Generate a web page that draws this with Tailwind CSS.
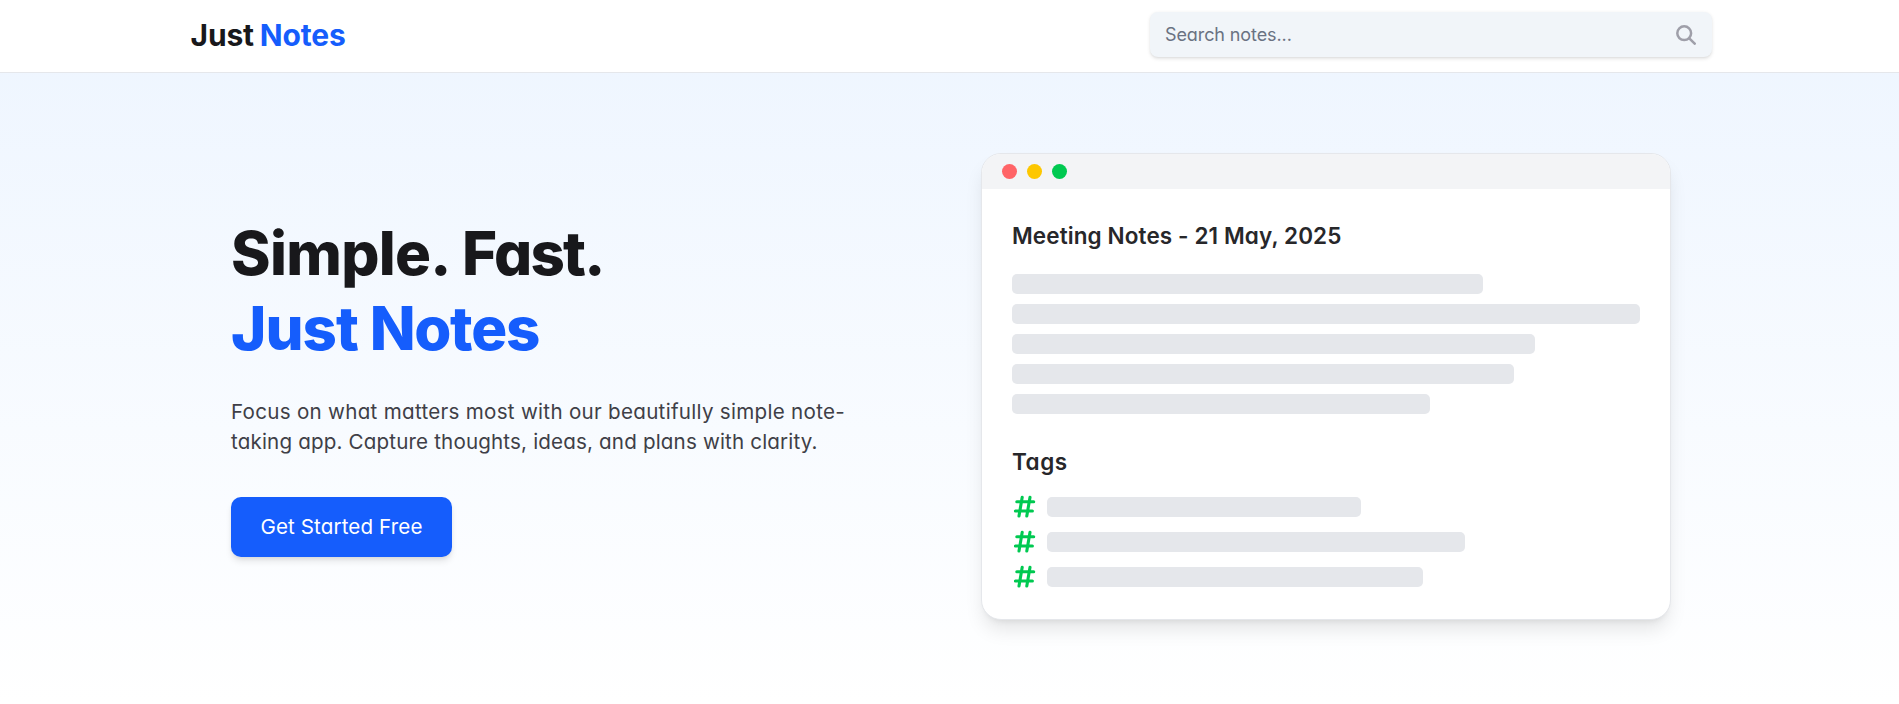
<!DOCTYPE html>
<html lang="en">
<head>
<meta charset="utf-8">
<title>Just Notes</title>
<script src="https://cdn.jsdelivr.net/npm/@tailwindcss/browser@4"></script>
</head>
<body class="h-[704px] overflow-hidden bg-white font-['Inter','Liberation_Sans',sans-serif] [font-feature-settings:'cv11'] text-zinc-900">
<header class="h-[73px] border-b border-gray-200 bg-white">
  <div class="ml-[189px] flex h-[69px] w-[1523px] items-center justify-between">
    <a class="pl-[1.5px] text-[30px] font-bold tracking-[-0.15px] leading-none whitespace-nowrap [word-spacing:-1px]">Just <span class="text-[#155dfc]">Notes</span></a>
    <div class="flex h-[45px] w-[562px] items-center justify-between rounded-[8px] bg-slate-100 pr-[16px] pl-[15px] shadow-[0_1.25px_3.75px_rgb(0_0_0/0.1),0_1.25px_2.5px_-1.25px_rgb(0_0_0/0.1)]">
      <span class="pb-px text-[18px] tracking-[-0.1px] text-gray-500">Search notes...</span>
      <svg class="mt-px size-[20px] text-[#9f9fa9]" viewBox="0 0 20 20" fill="none" stroke="currentColor" stroke-width="2.5" stroke-linecap="round"><circle cx="8.2" cy="8.2" r="6.9"/><path d="M13.3 13.3l5.4 5.4"/></svg>
    </div>
  </div>
</header>
<main class="h-[631px] bg-gradient-to-b from-blue-50 to-white">
  <div class="ml-[231px] flex w-[1440px] justify-between pt-[80px]">
    <section class="w-[640px] pt-[63px]">
      <h1 class="text-[60px] font-extrabold leading-[75px] whitespace-nowrap"><span class="tracking-[-0.7px]">Simple.</span><span class="tracking-[-1.8px]"> Fast.</span><br><span class="text-[#155dfc]"><span class="tracking-[-1px]">Just</span><span class="tracking-[-1.3px]"> Notes</span></span></h1>
      <p class="mt-[31px] text-[20.6px] leading-[30px] text-zinc-700 whitespace-nowrap"><span class="tracking-[0.28px]">Focus on what matters most with our beautifully simple note-</span><br><span class="tracking-[0.16px]">taking app. Capture thoughts, ideas, and plans with clarity.</span></p>
      <button class="mt-[40px] h-[60px] w-[221px] rounded-[10px] bg-[#155dfc] text-[20.6px] tracking-[0.12px] text-white shadow-[0_5px_7.5px_-1.25px_rgb(0_0_0/0.1),0_2.5px_5px_-2.5px_rgb(0_0_0/0.1)] whitespace-nowrap">Get Started Free</button>
    </section>
    <section class="h-[467px] w-[690px] overflow-hidden rounded-[20px] border border-gray-200 bg-white shadow-[0_12.5px_18.75px_-3.75px_rgb(0_0_0/0.1),0_5px_7.5px_-5px_rgb(0_0_0/0.1)]">
      <div class="flex h-[35px] items-center gap-[10px] bg-gray-100 px-[20px]">
        <i class="size-[15px] rounded-full bg-[#ff6467]"></i><i class="size-[15px] rounded-full bg-[#fdc700]"></i><i class="size-[15px] rounded-full bg-[#00c951]"></i>
      </div>
      <div class="p-[30px]">
        <h2 class="text-[22.5px] font-semibold leading-[34px] tracking-[0.11px] text-zinc-800 whitespace-nowrap">Meeting Notes - 21 May, 2025</h2>
        <div class="mt-[21px] flex flex-col gap-[10px]">
          <div class="h-[20px] w-3/4 rounded-[5px] bg-gray-200"></div>
          <div class="h-[20px] w-full rounded-[5px] bg-gray-200"></div>
          <div class="h-[20px] w-5/6 rounded-[5px] bg-gray-200"></div>
          <div class="h-[20px] w-4/5 rounded-[5px] bg-gray-200"></div>
          <div class="h-[20px] w-[418px] rounded-[5px] bg-gray-200"></div>
        </div>
        <h2 class="mt-[30px] text-[22.5px] font-semibold leading-[35px] tracking-[0.5px] text-zinc-800">Tags</h2>
        <div class="mt-[15px] flex flex-col gap-[10px]">
          <div class="flex h-[25px] items-center">
            <svg class="mr-[10px] size-[25px] shrink-0 text-[#00c951]" viewBox="0 0 25 25" fill="none" stroke="currentColor" stroke-width="3.1" stroke-linecap="round"><path d="M4.8 7.7H21.7M3.4 17H20.4M10.2 3.2L7 22M18 3.2L14.8 22"/></svg>
            <div class="h-[20px] w-[314px] rounded-[5px] bg-gray-200"></div>
          </div>
          <div class="flex h-[25px] items-center">
            <svg class="mr-[10px] size-[25px] shrink-0 text-[#00c951]" viewBox="0 0 25 25" fill="none" stroke="currentColor" stroke-width="3.1" stroke-linecap="round"><path d="M4.8 7.7H21.7M3.4 17H20.4M10.2 3.2L7 22M18 3.2L14.8 22"/></svg>
            <div class="h-[20px] w-[418px] rounded-[5px] bg-gray-200"></div>
          </div>
          <div class="flex h-[25px] items-center">
            <svg class="mr-[10px] size-[25px] shrink-0 text-[#00c951]" viewBox="0 0 25 25" fill="none" stroke="currentColor" stroke-width="3.1" stroke-linecap="round"><path d="M4.8 7.7H21.7M3.4 17H20.4M10.2 3.2L7 22M18 3.2L14.8 22"/></svg>
            <div class="h-[20px] w-[376px] rounded-[5px] bg-gray-200"></div>
          </div>
        </div>
      </div>
    </section>
  </div>
</main>
</body>
</html>
